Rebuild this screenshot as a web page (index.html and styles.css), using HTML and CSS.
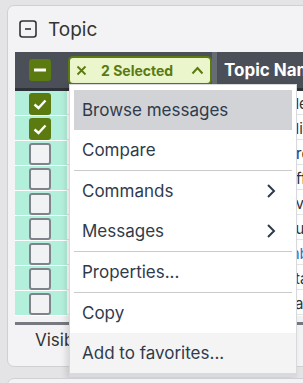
FILE: index.html
```html
<!DOCTYPE html>
<html lang="en">

<head>
    <meta charset="UTF-8">
    <meta name="viewport" content="width=device-width, initial-scale=1.0">
    <title>Topic</title>
    <link rel="stylesheet" href="styles.css">
</head>

<body>
    <div class="card">
        <div class="card-title">
            <svg class="collapse-icon" width="18" height="18" viewBox="0 0 18 18">
                <rect x="1" y="1" width="16" height="16" rx="2.5" fill="none" stroke="#333" stroke-width="1.6"/>
                <line x1="6" y1="9" x2="12" y2="9" stroke="#333" stroke-width="1.6"/>
            </svg>
            <span>Topic</span>
        </div>

        <div class="table">
            <div class="table-head">
                <div class="head-check">
                    <span class="checkbox checked">
                        <svg width="22" height="22" viewBox="0 0 22 22"><line x1="5" y1="11" x2="17" y2="11" stroke="#fff" stroke-width="3"/></svg>
                    </span>
                </div>
                <div class="head-select">
                    <div class="selected-pill">
                        <svg class="pill-x" width="11" height="11" viewBox="0 0 11 11"><path d="M1.5 1.5 L9.5 9.5 M9.5 1.5 L1.5 9.5" stroke="#5b7a10" stroke-width="1.8"/></svg>
                        <span class="pill-label">2 Selected</span>
                        <svg class="pill-caret" width="13" height="9" viewBox="0 0 13 9"><polyline points="1.5,7.5 6.5,2 11.5,7.5" fill="none" stroke="#5b7a10" stroke-width="2"/></svg>
                    </div>
                </div>
                <div class="head-sep"></div>
                <div class="head-name">Topic Name</div>
            </div>

            <div class="table-body">
                <div class="row"><div class="cell-check"><span class="checkbox checked"><svg width="22" height="22" viewBox="0 0 22 22"><polyline points="5.5,11.5 9.5,15 16.5,7.5" fill="none" stroke="#fff" stroke-width="2.4"/></svg></span></div><div class="cell-name">alerts</div></div>
                <div class="row"><div class="cell-check"><span class="checkbox checked"><svg width="22" height="22" viewBox="0 0 22 22"><polyline points="5.5,11.5 9.5,15 16.5,7.5" fill="none" stroke="#fff" stroke-width="2.4"/></svg></span></div><div class="cell-name">clicks</div></div>
                <div class="row"><div class="cell-check"><span class="checkbox"></span></div><div class="cell-name">orders</div></div>
                <div class="row"><div class="cell-check"><span class="checkbox"></span></div><div class="cell-name">offers</div></div>
                <div class="row"><div class="cell-check"><span class="checkbox"></span></div><div class="cell-name">events</div></div>
                <div class="row"><div class="cell-check"><span class="checkbox"></span></div><div class="cell-name">audit</div></div>
                <div class="row"><div class="cell-check"><span class="checkbox"></span></div><div class="cell-name link">inbox</div></div>
                <div class="row"><div class="cell-check"><span class="checkbox"></span></div><div class="cell-name">stats</div></div>
                <div class="row"><div class="cell-check"><span class="checkbox"></span></div><div class="cell-name">sales</div></div>
            </div>
            <div class="table-foot"></div>
        </div>

        <div class="visible-label">Visible columns</div>

        <div class="menu">
            <div class="menu-item active">Browse messages</div>
            <div class="menu-item">Compare</div>
            <div class="menu-sep"></div>
            <div class="menu-item">Commands
                <svg class="chevron" width="10" height="16" viewBox="0 0 10 16"><polyline points="2,2 8,8 2,14" fill="none" stroke="#2f3b4c" stroke-width="2"/></svg>
            </div>
            <div class="menu-item">Messages
                <svg class="chevron" width="10" height="16" viewBox="0 0 10 16"><polyline points="2,2 8,8 2,14" fill="none" stroke="#2f3b4c" stroke-width="2"/></svg>
            </div>
            <div class="menu-sep"></div>
            <div class="menu-item">Properties...</div>
            <div class="menu-sep"></div>
            <div class="menu-item">Copy</div>
            <div class="menu-item hover">Add to favorites...</div>
        </div>
    </div>
    <div class="card next"></div>
</body>

</html>
```

FILE: styles.css
```css
body {
    font-family: Inter, "Noto Sans", sans-serif;
    background-color: #e4e4e7;
    margin: 0;
    height: 383px;
    overflow: hidden;
}

.card {
    position: relative;
    margin: 5px 0 0 7px;
    width: 320px;
    height: 362px;
    background-color: #f3f3f5;
    border: 1px solid #cfd0d4;
    border-radius: 7px;
    padding: 13px 0 0 7px;
    box-sizing: border-box;
}

.card.next {
    height: 40px;
    margin-top: 11px;
}

.card-title {
    display: flex;
    align-items: center;
    gap: 11px;
    padding-left: 4px;
    height: 20px;
    font-size: 19px;
    color: #333;
}

.table {
    margin-top: 13px;
}

.table-head {
    display: flex;
    height: 36px;
    background-color: #4b4f58;
    border-bottom: 3px solid #2e3138;
}

.head-check {
    flex: none;
    width: 53px;
    display: flex;
    align-items: center;
    padding-left: 14px;
    box-sizing: border-box;
}

.checkbox {
    width: 22px;
    height: 22px;
    border-radius: 3px;
    box-sizing: border-box;
    background-color: #f1f2f4;
    border: 2px solid #80838b;
    display: block;
}

.checkbox.checked {
    background-color: #5b7a10;
    border: none;
}

.checkbox svg {
    display: block;
}

.head-select {
    flex: none;
    width: 144px;
    display: flex;
    align-items: center;
}

.selected-pill {
    width: 144px;
    height: 29px;
    box-sizing: border-box;
    background-color: #ebf6cd;
    border: 2px solid #5b7a10;
    border-radius: 5px;
    display: flex;
    align-items: center;
    padding: 0 6px 0 6px;
    color: #5b7a10;
    font-weight: 700;
    font-size: 14px;
    white-space: nowrap;
}

.pill-label {
    padding-left: 14px;
}

.pill-caret {
    margin-left: auto;
}

.head-sep {
    flex: none;
    width: 5px;
    background-color: #676b73;
}

.head-name {
    display: flex;
    align-items: center;
    padding-left: 7px;
    color: #fff;
    font-weight: 700;
    font-size: 17px;
    white-space: nowrap;
}

.row {
    display: flex;
    height: 25px;
    border-bottom: 1px solid #fff;
    box-sizing: border-box;
}

.table-body {
    height: 231px;
    overflow: hidden;
}

.cell-check {
    flex: none;
    width: 52px;
    background-color: #b3f0dc;
    padding: 2px 0 0 14px;
    box-sizing: border-box;
}

.cell-name {
    flex: 1;
    background-color: #fff;
    padding-left: 220px;
    font-size: 15px;
    line-height: 25px;
    color: #333;
    border-bottom: 1px solid #e5e5e5;
}

.cell-name.link {
    color: #2f6fd0;
}

.table-foot {
    height: 3px;
    background-color: #767980;
}

.visible-label {
    padding: 5px 0 0 20px;
    font-size: 17px;
    color: #333;
    white-space: nowrap;
}

.menu {
    position: absolute;
    left: 61px;
    top: 78px;
    width: 228px;
    padding: 5px 0 0 0;
    box-sizing: border-box;
    background-color: #fff;
    border: 1px solid #d8d9dc;
    border-bottom: 4px solid #d9dadd;
    box-shadow: -3px 2px 6px rgba(0, 0, 0, 0.12);
}

.menu-item {
    display: flex;
    align-items: center;
    justify-content: space-between;
    height: 40px;
    margin: 0 4px;
    padding: 0 16px 0 8px;
    font-size: 17px;
    color: #2f3b4c;
}

.menu-item.active {
    background-color: #d1d3d7;
}

.menu-item.hover {
    background-color: #f4f4f5;
    margin: 0;
    padding-left: 12px;
}

.menu-sep {
    height: 1px;
    margin: 0 4px;
    background-color: #c9cacd;
}
```
